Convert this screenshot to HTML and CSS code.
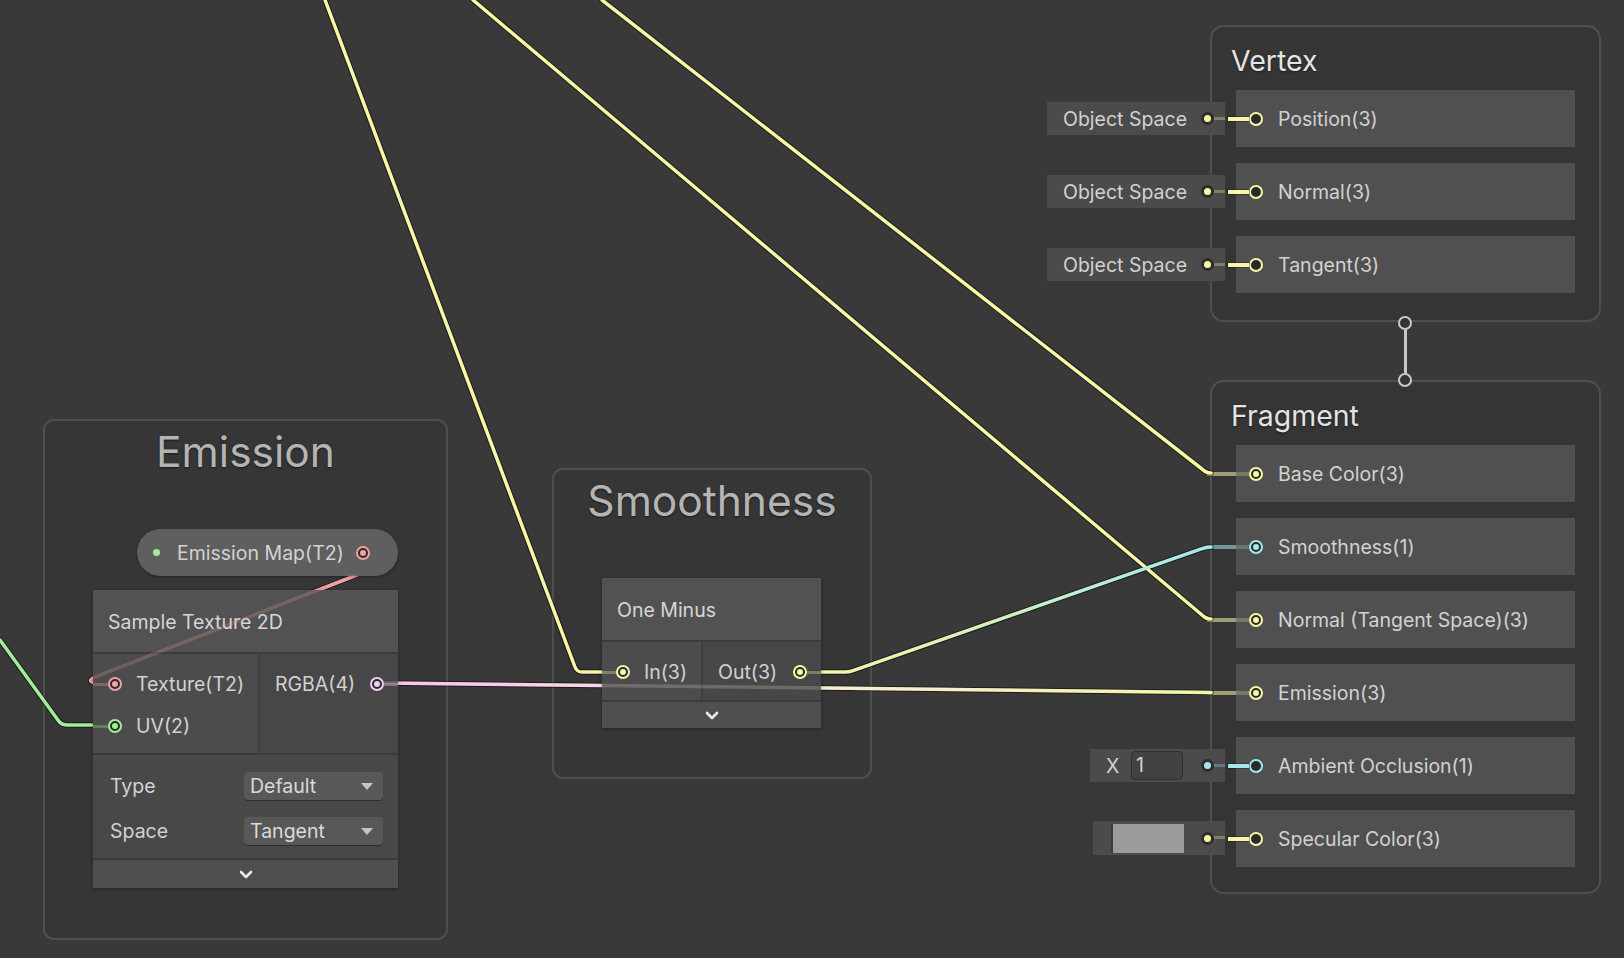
FILE: index.html
```html
<!DOCTYPE html>
<html>
<head>
<meta charset="utf-8">
<title>Shader Graph</title>
<link rel="stylesheet" href="styles.css">
</head>
<body>
<div class="canvas">

  <div class="group g-emission"><div class="group-title">Emission</div></div>
  <div class="group g-smooth"><div class="group-title">Smoothness</div></div>

  <div class="context ctx-vertex">
    <div class="ctx-title">Vertex</div>
    <div class="ctx-rows">
      <div class="slot">
        <div class="inline c-y w-space"><span class="inline-label">Object Space</span><span class="inline-dot"></span></div>
        <span class="port c-y stub-bright"></span><span class="slot-label">Position(3)</span>
      </div>
      <div class="slot">
        <div class="inline c-y w-space"><span class="inline-label">Object Space</span><span class="inline-dot"></span></div>
        <span class="port c-y stub-bright"></span><span class="slot-label">Normal(3)</span>
      </div>
      <div class="slot">
        <div class="inline c-y w-space"><span class="inline-label">Object Space</span><span class="inline-dot"></span></div>
        <span class="port c-y stub-bright"></span><span class="slot-label">Tangent(3)</span>
      </div>
    </div>
  </div>

  <div class="flow-link"><span class="flow-ring"></span><span class="flow-ring"></span></div>

  <div class="context ctx-fragment">
    <div class="ctx-title">Fragment</div>
    <div class="ctx-rows">
      <div class="slot"><span class="port c-y on stub-edge"></span><span class="slot-label">Base Color(3)</span></div>
      <div class="slot"><span class="port c-c on stub-edge"></span><span class="slot-label">Smoothness(1)</span></div>
      <div class="slot"><span class="port c-y on stub-edge"></span><span class="slot-label">Normal (Tangent Space)(3)</span></div>
      <div class="slot"><span class="port c-y on stub-edge"></span><span class="slot-label">Emission(3)</span></div>
      <div class="slot">
        <div class="inline c-c w-x"><span class="inline-x">X</span><span class="inline-field">1</span><span class="inline-dot"></span></div>
        <span class="port c-c stub-bright"></span><span class="slot-label">Ambient Occlusion(1)</span>
      </div>
      <div class="slot">
        <div class="inline c-y w-color"><span class="swatch"></span><span class="inline-dot"></span></div>
        <span class="port c-y stub-bright"></span><span class="slot-label">Specular Color(3)</span>
      </div>
    </div>
  </div>

  <svg class="edges" width="1624" height="958" viewBox="0 0 1624 958">
    <defs>
      <linearGradient id="gD" gradientUnits="userSpaceOnUse" x1="850" y1="0" x2="1207" y2="0">
        <stop offset="0" stop-color="#f4f4a8"/>
        <stop offset="1" stop-color="#a4eaea"/>
      </linearGradient>
      <linearGradient id="gE" gradientUnits="userSpaceOnUse" x1="384" y1="0" x2="1207" y2="0">
        <stop offset="0" stop-color="#f8c4f0"/>
        <stop offset="0.5" stop-color="#f6ecd8"/>
        <stop offset="1" stop-color="#f4f4a8"/>
      </linearGradient>
    </defs>
    <g class="shadow">
      <path d="M325 0 L575 667 Q577 672 582 672 L617 672"/>
      <path d="M473 0 L1202 615 Q1206 619 1211 619"/>
      <path d="M602 0 L1202 469 Q1206 473 1211 473"/>
      <path d="M807 672 L845 672 Q849 672 853 670.6 L1202 548.7 Q1206 547 1211 547"/>
      <path d="M384 683 L1211 692.5"/>
      <path d="M380 566 L95 677 Q86 681 95 683 L100 683"/>
      <path d="M0 640 L59 721.5 Q62 725 67 725 L94 725"/>
    </g>
    <path class="e y" d="M325 0 L575 667 Q577 672 582 672 L617 672"/>
    <path class="e y" d="M473 0 L1202 615 Q1206 619 1211 619"/>
    <path class="e y" d="M602 0 L1202 469 Q1206 473 1211 473"/>
    <path class="e" stroke="url(#gD)" d="M807 672 L845 672 Q849 672 853 670.6 L1202 548.7 Q1206 547 1211 547"/>
    <path class="e" stroke="url(#gE)" d="M384 683 L1211 692.5"/>
    <path class="e p" d="M380 566 L95 677 Q86 681 95 683 L100 683"/>
    <path class="e g" d="M0 640 L59 721.5 Q62 725 67 725 L94 725"/>
  </svg>

  <div class="node pill">
    <span class="pill-dot"></span>
    <span class="pill-label">Emission Map(T2)</span>
    <span class="port c-p on"></span>
  </div>

  <div class="node n-sample">
    <div class="node-head">Sample Texture 2D</div>
    <div class="node-ports">
      <div class="ports-in">
        <div class="prow"><span class="port c-p on stub-in"></span><span class="plabel">Texture(T2)</span></div>
        <div class="prow"><span class="port c-g on stub-in"></span><span class="plabel">UV(2)</span></div>
      </div>
      <div class="ports-out">
        <div class="prow"><span class="plabel">RGBA(4)</span><span class="port c-v on stub-out"></span></div>
      </div>
    </div>
    <div class="node-controls">
      <div class="crow"><span class="clabel">Type</span><span class="dropdown">Default<span class="arrow"></span></span></div>
      <div class="crow"><span class="clabel">Space</span><span class="dropdown">Tangent<span class="arrow"></span></span></div>
    </div>
    <div class="node-foot">
      <svg class="chev" width="14" height="9" viewBox="0 0 14 9"><polyline points="2,2 7,7 12,2"/></svg>
    </div>
  </div>

  <div class="node n-oneminus">
    <div class="node-head">One Minus</div>
    <div class="node-ports">
      <div class="ports-in">
        <div class="prow"><span class="port c-y on stub-in"></span><span class="plabel">In(3)</span></div>
      </div>
      <div class="ports-out">
        <div class="prow"><span class="plabel">Out(3)</span><span class="port c-y on stub-out"></span></div>
      </div>
    </div>
    <div class="node-foot short">
      <svg class="chev" width="14" height="9" viewBox="0 0 14 9"><polyline points="2,2 7,7 12,2"/></svg>
    </div>
  </div>

  <svg class="edges-over" width="1624" height="958" viewBox="0 0 1624 958">
    <path class="e" stroke="url(#gE)" d="M384 683 L1211 692.5"/>
    <path class="e p" d="M354 576 L95 677"/>
  </svg>

</div>
</body>
</html>
```

FILE: styles.css
```css
* { box-sizing: border-box; margin: 0; padding: 0; }

html, body {
  width: 1624px;
  height: 958px;
  overflow: hidden;
  background: #393939;
}

body {
  font-family: Inter, "Noto Sans", "Liberation Sans", sans-serif;
  font-size: 19.5px;
  color: #d2d2d2;
}

.canvas {
  position: relative;
  width: 1624px;
  height: 958px;
}

/* colour tokens */
.c-y { --c: #f7f7a6; }
.c-c { --c: #a2e8ea; }
.c-g { --c: #a2ee98; }
.c-p { --c: #f5a0a0; }
.c-v { --c: #f6ccf0; }

/* ---------- groups ---------- */
.group {
  position: absolute;
  z-index: 1;
  border: 2px solid #4e4e4e;
  border-radius: 11px;
  background: #363636;
}
.g-emission { left: 43px; top: 419px; width: 405px; height: 521px; }
.g-smooth { left: 552px; top: 468px; width: 320px; height: 311px; }

.group-title {
  padding-top: 6px;
  line-height: 50px;
  font-size: 42.5px;
  text-align: center;
  color: #b4b4b4;
  text-shadow: 0 1px 2px rgba(0, 0, 0, 0.55);
}

/* ---------- master stack contexts ---------- */
.context {
  position: absolute;
  z-index: 1;
  left: 1210px;
  width: 391px;
  padding: 0 24px;
  border: 2px solid #4f4f4f;
  border-radius: 14px;
  background: #353535;
}
.ctx-vertex { top: 25px; height: 297px; }
.ctx-fragment { top: 380px; height: 514px; }

.ctx-title {
  margin-left: -5px;
  padding: 16px 0 11px;
  line-height: 36px;
  font-size: 28.5px;
  color: #e4e4e4;
  text-shadow: 0 1px 2px rgba(0, 0, 0, 0.5);
}

.ctx-rows {
  display: flex;
  flex-direction: column;
  gap: 16px;
}

.slot {
  position: relative;
  height: 57px;
  display: flex;
  align-items: center;
  background: #505050;
}
.slot .port { margin-left: 13px; }
.slot-label { margin-left: 15px; white-space: nowrap; }

/* ---------- ports ---------- */
.port {
  position: relative;
  flex: none;
  width: 14px;
  height: 14px;
  border-radius: 50%;
  border: 2px solid var(--c);
  background: #2a2a2a;
}
.port.on::after {
  content: "";
  position: absolute;
  left: 2px;
  top: 2px;
  width: 6px;
  height: 6px;
  border-radius: 50%;
  background: var(--c);
}
.stub-bright::before,
.stub-edge::before,
.stub-in::before,
.stub-out::before {
  content: "";
  position: absolute;
  top: 3.5px;
  height: 3px;
  background: var(--c);
}
.stub-bright::before {
  right: calc(100% + 2px);
  width: 21px;
  top: 3px;
  height: 4px;
  box-shadow: 0 0 0 1px rgba(0, 0, 0, 0.25);
}
.stub-edge::before {
  right: calc(100% + 2px);
  width: 42px;
  top: 3px;
  height: 4px;
  opacity: 0.55;
  -webkit-mask-image: linear-gradient(to right, #000 29px, rgba(0, 0, 0, 0.45) 29px);
  mask-image: linear-gradient(to right, #000 29px, rgba(0, 0, 0, 0.45) 29px);
}
.stub-in::before {
  right: calc(100% + 2px);
  width: 15px;
  opacity: 0.3;
}
.stub-out::before {
  left: calc(100% + 2px);
  width: 14px;
  opacity: 0.3;
}

/* ---------- inline port values ---------- */
.inline {
  position: absolute;
  right: calc(100% + 11px);
  top: 12px;
  height: 33px;
  display: flex;
  align-items: center;
  background: #4b4b4b;
}
.inline::after {
  content: "";
  position: absolute;
  right: 0;
  top: 15px;
  width: 11px;
  height: 3px;
  background: var(--c);
  opacity: 0.3;
}
.w-space { width: 178px; padding-left: 16px; }
.w-x { width: 135px; padding-left: 16px; }
.w-color { width: 132px; top: 11px; height: 34px; padding-left: 18px; }

.inline-label { white-space: nowrap; }
.inline-dot {
  margin-left: auto;
  margin-right: 14px;
  width: 7px;
  height: 7px;
  border-radius: 50%;
  background: var(--c);
  box-shadow: 0 0 0 3px #2d2d2d;
  flex: none;
}
.inline-x { width: 15px; }
.inline-field {
  margin-left: 10px;
  width: 52px;
  height: 29px;
  padding-left: 4px;
  line-height: 27px;
  border: 1px solid #2f2f2f;
  border-radius: 4px;
  background: #424242;
}
.swatch {
  width: 73px;
  height: 29px;
  border-left: 2px solid #3a3a3a;
  background: #9b9b9b;
}

/* ---------- flow link between vertex and fragment ---------- */
.flow-link {
  position: absolute;
  z-index: 2;
  left: 1398px;
  top: 316px;
  width: 14px;
  height: 71px;
  display: flex;
  flex-direction: column;
  justify-content: space-between;
}
.flow-link::before {
  content: "";
  position: absolute;
  left: 5.5px;
  top: 10px;
  width: 3px;
  height: 51px;
  background: #c8c8c8;
}
.flow-ring {
  position: relative;
  width: 14px;
  height: 14px;
  border-radius: 50%;
  border: 2px solid #cacaca;
  background: #343434;
}

/* ---------- edges ---------- */
.edges, .edges-over {
  position: absolute;
  left: 0;
  top: 0;
  pointer-events: none;
}
.edges { z-index: 2; }
.edges-over { z-index: 4; opacity: 0.22; }
.edges path, .edges-over path { fill: none; stroke-linecap: round; stroke-linejoin: round; }
.shadow path { stroke: rgba(0, 0, 0, 0.5); stroke-width: 5.5; }
.e { stroke-width: 3.5; }
.e.y { stroke: #f7f7a6; }
.e.p { stroke: #f5a0a0; }
.e.g { stroke: #a2ee98; }

/* ---------- nodes ---------- */
.node {
  position: absolute;
  z-index: 3;
}

.pill {
  left: 137px;
  top: 529px;
  width: 261px;
  height: 47px;
  display: flex;
  align-items: center;
  border-radius: 24px;
  background: #5f5f5f;
  box-shadow: 0 1px 3px rgba(0, 0, 0, 0.35);
}
.pill-dot {
  margin-left: 16px;
  width: 7px;
  height: 7px;
  border-radius: 50%;
  background: #a2ee98;
  flex: none;
}
.pill-label { margin-left: 17px; white-space: nowrap; }
.pill .port { margin-left: auto; margin-right: 28px; }

.n-sample { left: 93px; top: 590px; width: 305px; background: #4a4a4a; box-shadow: 0 1px 4px rgba(0, 0, 0, 0.3); }
.n-oneminus { left: 602px; top: 578px; width: 219px; background: #4a4a4a; box-shadow: 0 1px 4px rgba(0, 0, 0, 0.3); }

.node-head {
  height: 64px;
  display: flex;
  align-items: center;
  padding-left: 15px;
  padding-top: 1px;
  background: #525252;
  border-bottom: 2px solid #3c3c3c;
  color: #d6d6d6;
}

.node-ports {
  display: flex;
  border-bottom: 2px solid #3c3c3c;
}
.ports-in {
  width: 167px;
  padding: 9px 0 6px;
  background: #4c4c4c;
  border-right: 2px solid #3f3f3f;
}
.n-oneminus .ports-in { width: 101px; padding: 9px 0 7px; }
.ports-out {
  flex: 1;
  padding: 9px 0 6px;
  background: #474747;
}
.n-oneminus .ports-out { padding: 9px 0 7px; }

.prow {
  height: 42px;
  display: flex;
  align-items: center;
}
.ports-in .port { margin-left: 15px; }
.n-oneminus .ports-in .port { margin-left: 14px; }
.ports-in .plabel { margin-left: 14px; }
.ports-out .prow { justify-content: space-between; padding: 0 14px 0 15px; }
.plabel { white-space: nowrap; }

.node-controls {
  display: flex;
  flex-direction: column;
  gap: 17px;
  padding: 17px 15px 13px 17px;
  background: #484848;
  border-bottom: 2px solid #3c3c3c;
}
.crow {
  height: 28px;
  display: flex;
  align-items: center;
  justify-content: space-between;
}
.dropdown {
  width: 139px;
  height: 28px;
  display: flex;
  align-items: center;
  padding: 0 10px 0 6px;
  border-radius: 4px;
  background: #585858;
  box-shadow: 0 1px 0 #2e2e2e;
  color: #dadada;
}
.arrow {
  margin-left: auto;
  width: 0;
  height: 0;
  border-left: 6px solid transparent;
  border-right: 6px solid transparent;
  border-top: 7px solid #c6c6c6;
}

.node-foot {
  height: 28px;
  display: flex;
  align-items: center;
  justify-content: center;
  background: #4f4f4f;
}
.node-foot.short { height: 26px; }
.chev polyline {
  fill: none;
  stroke: #ececec;
  stroke-width: 2.6;
  stroke-linecap: round;
  stroke-linejoin: round;
}
```
